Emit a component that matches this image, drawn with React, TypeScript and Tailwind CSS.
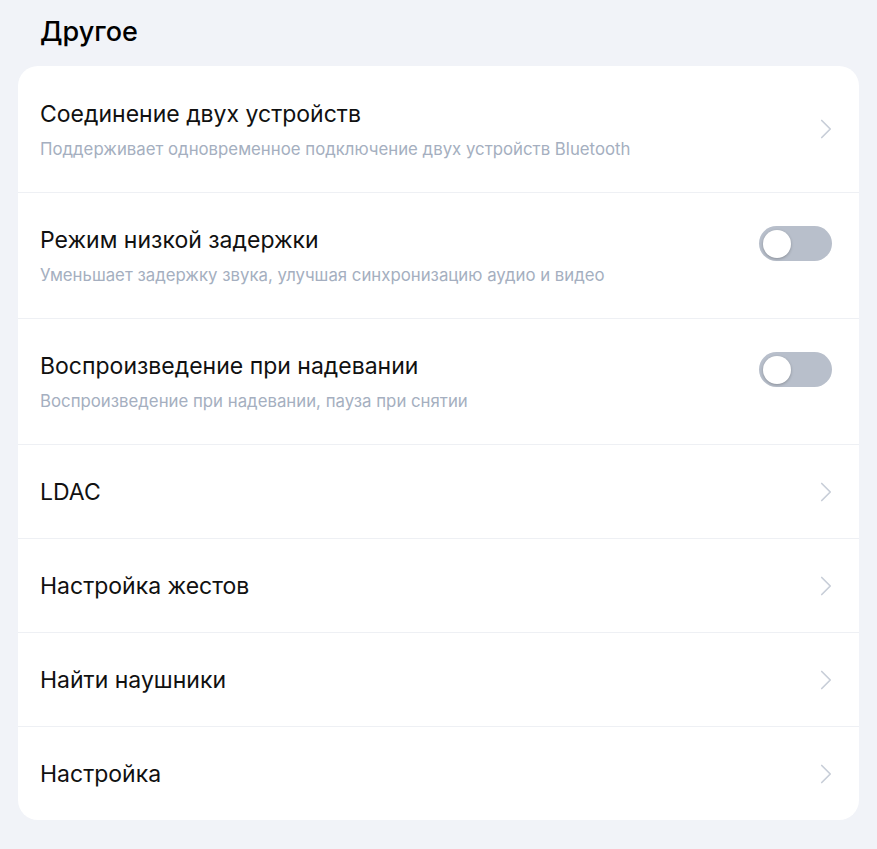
import { ChevronRight } from "lucide-react";

type Row = {
  title: string;
  subtitle?: string;
  kind: "link" | "toggle";
};

const ROWS: Row[] = [
  {
    title: "Соединение двух устройств",
    subtitle: "Поддерживает одновременное подключение двух устройств Bluetooth",
    kind: "link",
  },
  {
    title: "Режим низкой задержки",
    subtitle: "Уменьшает задержку звука, улучшая синхронизацию аудио и видео",
    kind: "toggle",
  },
  {
    title: "Воспроизведение при надевании",
    subtitle: "Воспроизведение при надевании, пауза при снятии",
    kind: "toggle",
  },
  { title: "LDAC", kind: "link" },
  { title: "Настройка жестов", kind: "link" },
  { title: "Найти наушники", kind: "link" },
  { title: "Настройка", kind: "link" },
];

function Toggle() {
  return (
    <div className="w-[73px] h-[35px] rounded-full bg-[#b8bfcb] p-[4px] flex items-center mb-[24px] mr-[11px]">
      <div className="w-[28px] h-[28px] rounded-full bg-white shadow-[0_1px_3px_rgba(0,0,0,0.25)]" />
    </div>
  );
}

export default function App() {
  return (
    <div
      className="min-h-[849px] bg-[#f1f3f8] px-[18px] pt-[13px] pb-[29px]"
      style={{ fontFamily: "Inter, Roboto, sans-serif" }}
    >
      <h1 className="pl-[22px] text-[27px] leading-[38px] text-black font-medium mb-[15px]">
        Другое
      </h1>
      <div className="bg-white rounded-[20px] overflow-hidden">
        {ROWS.map((row, i) => (
          <div
            key={row.title}
            className={`flex items-center justify-between pl-[22px] pr-[16px] ${
              row.subtitle ? "h-[126px]" : "h-[94px]"
            } ${i > 0 ? "border-t border-[#eef0f4]" : ""}`}
          >
            <div className="flex flex-col gap-[11px]">
              <div className="text-[23px] leading-[28px] text-[#111111]">
                {row.title}
              </div>
              {row.subtitle && (
                <div className="text-[16.8px] leading-[20px] text-[#a5afc0]">
                  {row.subtitle}
                </div>
              )}
            </div>
            {row.kind === "toggle" ? (
              <Toggle />
            ) : (
              <ChevronRight className="w-[34px] h-[34px] text-[#c8ced8]" strokeWidth={1.2} />
            )}
          </div>
        ))}
      </div>
    </div>
  );
}
